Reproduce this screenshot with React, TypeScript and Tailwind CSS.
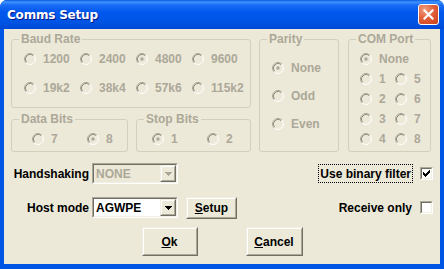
import React from "react";

function Radio({ checked, label }: { checked?: boolean; label: string }) {
  return (
    <div className="flex h-[16px] items-center whitespace-nowrap">
      <svg width="12" height="12" viewBox="0 0 12 12" className="shrink-0">
        <circle cx="6" cy="6" r="5" fill="#ECE9D8" />
        <path d="M2.11 9.89 A5.5 5.5 0 0 1 9.89 2.11" fill="none" stroke="#ACA899" strokeWidth="1" />
        <path d="M9.89 2.11 A5.5 5.5 0 0 1 2.11 9.89" fill="none" stroke="#FFFFFF" strokeWidth="1" />
        <path d="M2.82 9.18 A4.5 4.5 0 0 1 9.18 2.82" fill="none" stroke="#8E8C80" strokeWidth="1" />
        <path d="M9.18 2.82 A4.5 4.5 0 0 1 2.82 9.18" fill="none" stroke="#F1EFE2" strokeWidth="1" />
        {checked && <circle cx="6" cy="6" r="1.7" fill="#ACA899" />}
      </svg>
      <span className="ml-[7px] text-[#ACA899]">{label}</span>
    </div>
  );
}

function CheckMark() {
  const cols = [2, 3, 4, 3, 2, 1, 0];
  return (
    <svg width="7" height="7" viewBox="0 0 7 7" shapeRendering="crispEdges">
      {cols.map((y, x) => (
        <rect key={x} x={x} y={y} width="1" height="3" fill="#000" />
      ))}
    </svg>
  );
}

function Check({ checked }: { checked?: boolean }) {
  return (
    <div className="h-[13px] w-[13px] shrink-0 border border-t-[#ACA899] border-l-[#ACA899] border-b-white border-r-white">
      <div className="flex h-full w-full items-center justify-center border border-t-[#716F64] border-l-[#716F64] border-b-[#F1EFE2] border-r-[#F1EFE2] bg-white">
        {checked && <CheckMark />}
      </div>
    </div>
  );
}

function Combo({ value, disabled }: { value: string; disabled?: boolean }) {
  return (
    <div className="h-[21px] w-[86px] shrink-0 border border-t-[#ACA899] border-l-[#ACA899] border-b-white border-r-white">
      <div
        className={
          "flex h-full w-full items-center border border-t-[#716F64] border-l-[#716F64] border-b-[#F1EFE2] border-r-[#F1EFE2] " +
          (disabled ? "bg-[#ECE9D8]" : "bg-white")
        }
      >
        <span className={"flex-1 pl-[2px] " + (disabled ? "text-[#ACA899]" : "text-black")}>{value}</span>
        <div className="h-[17px] w-[16px] border border-t-[#F1EFE2] border-l-[#F1EFE2] border-b-[#716F64] border-r-[#716F64]">
          <div className="flex h-full w-full items-center justify-center border border-t-white border-l-white border-b-[#ACA899] border-r-[#ACA899] bg-[#ECE9D8]">
            <svg width="7" height="4" viewBox="0 0 7 4" shapeRendering="crispEdges">
              <path d="M0 0H7L3.5 4Z" fill={disabled ? "#ACA899" : "#000"} />
            </svg>
          </div>
        </div>
      </div>
    </div>
  );
}

function Btn({ children, w, h }: { children: React.ReactNode; w: string; h: string }) {
  return (
    <div className={"shrink-0 border border-t-[#F1EFE2] border-l-[#F1EFE2] border-b-[#716F64] border-r-[#716F64] " + w + " " + h}>
      <div className="flex h-full w-full items-center justify-center border border-t-white border-l-white border-b-[#ACA899] border-r-[#ACA899] bg-[#ECE9D8] text-black">
        {children}
      </div>
    </div>
  );
}

function Group({
  title,
  className,
  children,
}: {
  title: string;
  className: string;
  children: React.ReactNode;
}) {
  return (
    <fieldset className={"shrink-0 rounded-[3px] border border-[#D0D0BF] " + className}>
      <legend className="ml-[7px] px-[2px] leading-[14px] text-[#ACA899]">{title}</legend>
      {children}
    </fieldset>
  );
}

export default function App() {
  return (
    <div className="h-[269px] w-[444px] overflow-hidden bg-white font-['Liberation_Sans',Arial,sans-serif] text-[12px] font-bold leading-[14px]">
      <div className="flex h-full w-full flex-col rounded-t-[7px] bg-[#0055E5]">
        {/* title bar */}
        <div className="flex h-[29px] shrink-0 items-center rounded-t-[7px] bg-[linear-gradient(180deg,#0A5AE0_0px,#3D95FF_2px,#1A6CF5_5px,#0058EE_12px,#0054E3_22px,#0049D8_29px)] pl-[7px] pr-[5px]">
          <span className="font-['DejaVu_Sans',Verdana,sans-serif] text-[12px] font-bold tracking-[-0.2px] text-white [text-shadow:1px_1px_0_#0A1883]">
            Comms Setup
          </span>
          <div className="ml-auto flex h-[21px] w-[21px] items-center justify-center rounded-[3px] border border-white bg-[radial-gradient(circle_at_30%_25%,#F0A080_0%,#E2603A_45%,#C8401A_100%)]">
            <svg width="11" height="11" viewBox="0 0 11 11">
              <path d="M1.5 1.5L9.5 9.5M9.5 1.5L1.5 9.5" stroke="#fff" strokeWidth="2.2" strokeLinecap="square" />
            </svg>
          </div>
        </div>

        {/* client */}
        <div className="mx-[4px] mb-[5px] flex flex-1 flex-col bg-[#ECE9D8] pl-[7px] pt-[3px]">
          {/* top groups */}
          <div className="flex">
            <div className="flex w-[240px] flex-col gap-[4px]">
              <Group title="Baud Rate" className="h-[76px] w-[240px]">
                <div className="grid grid-cols-[56px_56px_56px_56px] gap-y-[13px] pl-[12px] pt-[5px]">
                  <Radio label="1200" />
                  <Radio label="2400" />
                  <Radio label="4800" checked />
                  <Radio label="9600" />
                  <Radio label="19k2" />
                  <Radio label="38k4" />
                  <Radio label="57k6" />
                  <Radio label="115k2" />
                </div>
              </Group>
              <div className="flex gap-[8px]">
                <Group title="Data Bits" className="h-[40px] w-[117px]">
                  <div className="grid grid-cols-[55px_40px] pl-[20px] pt-[5px]">
                    <Radio label="7" />
                    <Radio label="8" checked />
                  </div>
                </Group>
                <Group title="Stop Bits" className="h-[40px] w-[115px]">
                  <div className="grid grid-cols-[55px_40px] pl-[15px] pt-[5px]">
                    <Radio label="1" checked />
                    <Radio label="2" />
                  </div>
                </Group>
              </div>
            </div>
            <Group title="Parity" className="ml-[8px] h-[120px] w-[80px]">
              <div className="flex flex-col gap-[12px] pl-[12px] pt-[14px]">
                <Radio label="None" checked />
                <Radio label="Odd" />
                <Radio label="Even" />
              </div>
            </Group>
            <Group title="COM Port" className="ml-[9px] h-[120px] w-[83px]">
              <div className="grid grid-cols-[35px_35px] gap-y-[4px] pl-[11px] pt-[5px]">
                <div className="col-span-2">
                  <Radio label="None" checked />
                </div>
                <Radio label="1" />
                <Radio label="5" />
                <Radio label="2" />
                <Radio label="6" />
                <Radio label="3" />
                <Radio label="7" />
                <Radio label="4" />
                <Radio label="8" />
              </div>
            </Group>
          </div>

          {/* row 1 */}
          <div className="mt-[10px] flex h-[23px] items-center pr-[7px]">
            <span className="w-[78px] text-right text-black">Handshaking</span>
            <div className="ml-[3px]">
              <Combo value="NONE" disabled />
            </div>
            <div className="ml-auto flex items-center">
              <span className="flex h-[19px] items-center border border-dotted border-black px-[1px] text-black">
                Use binary filter
              </span>
              <div className="ml-[7px]">
                <Check checked />
              </div>
            </div>
          </div>

          {/* row 2 */}
          <div className="mt-[11px] flex h-[23px] items-center pr-[7px]">
            <span className="w-[78px] text-right text-black">Host mode</span>
            <div className="ml-[3px]">
              <Combo value="AGWPE" />
            </div>
            <div className="ml-[8px]">
              <Btn w="w-[51px]" h="h-[22px]">
                <span>
                  <span className="underline">S</span>etup
                </span>
              </Btn>
            </div>
            <div className="ml-auto flex items-center">
              <span className="text-black">Receive only</span>
              <div className="ml-[8px]">
                <Check />
              </div>
            </div>
          </div>

          {/* buttons */}
          <div className="mt-[8px] flex justify-center gap-[48px] pr-[7px]">
            <Btn w="w-[56px]" h="h-[29px]">
              <span>
                <span className="underline">O</span>k
              </span>
            </Btn>
            <Btn w="w-[57px]" h="h-[29px]">
              <span>
                <span className="underline">C</span>ancel
              </span>
            </Btn>
          </div>
        </div>
      </div>
    </div>
  );
}
